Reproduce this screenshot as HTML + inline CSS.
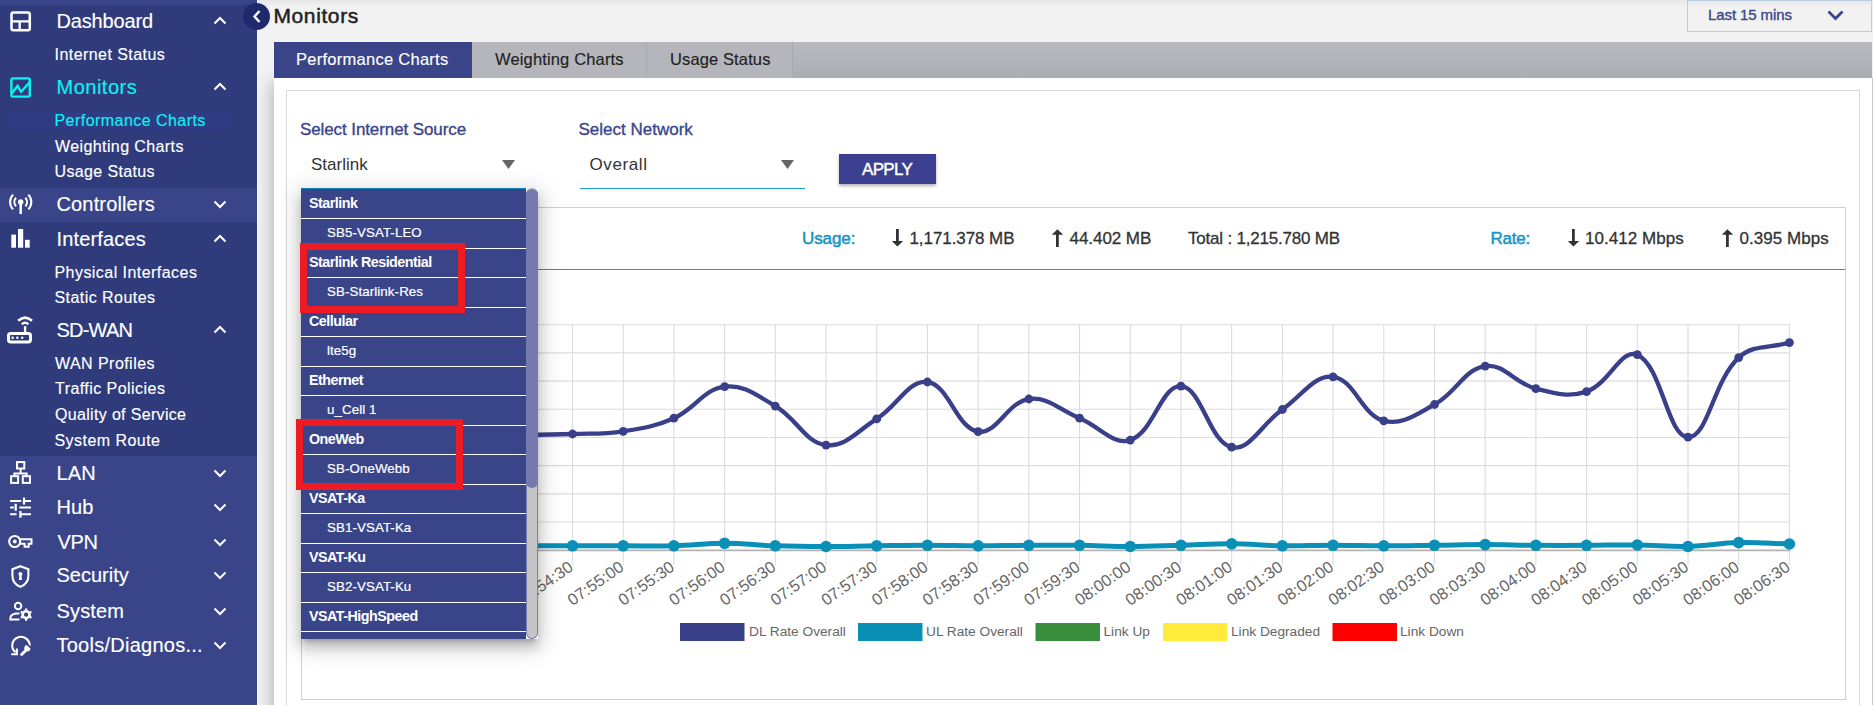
<!DOCTYPE html>
<html><head><meta charset="utf-8"><style>
html,body{margin:0;padding:0;width:1873px;height:705px;overflow:hidden;background:#f1f1f1;font-family:"Liberation Sans", sans-serif}
.t{position:absolute;white-space:nowrap;line-height:1;font-family:"Liberation Sans", sans-serif}
</style></head><body>
<div style="position:absolute;left:0px;top:0px;width:257px;height:705px;background:#3a4589"></div>
<div style="position:absolute;left:0px;top:5px;width:257px;height:183px;background:#303b7c"></div>
<div style="position:absolute;left:0px;top:222px;width:257px;height:234px;background:#303b7c"></div>
<div style="position:absolute;left:7px;top:111px;width:225px;height:18px;background:#2e3c84"></div>
<div style="position:absolute;left:257px;top:0px;width:1px;height:705px;background:#fafafa"></div>
<div class="t" style="left:56.5px;top:11px;font-size:20px;color:#fff;font-weight:400;letter-spacing:-0.15px;-webkit-text-stroke:0.15px #fff">Dashboard</div>
<div style="position:absolute;left:213px;top:11px;width:14px;height:9px"><svg width="14" height="9" viewBox="0 0 14 9"><path d="M1.5 7.5 L7 2 L12.5 7.5" fill="none" stroke="#fff" stroke-width="2"/></svg></div>
<div class="t" style="left:56.5px;top:77px;font-size:20px;color:#0af3f3;font-weight:400;letter-spacing:0.5px;-webkit-text-stroke:0.15px #0af3f3">Monitors</div>
<div style="position:absolute;left:213px;top:77px;width:14px;height:9px"><svg width="14" height="9" viewBox="0 0 14 9"><path d="M1.5 7.5 L7 2 L12.5 7.5" fill="none" stroke="#fff" stroke-width="2"/></svg></div>
<div class="t" style="left:56.5px;top:194px;font-size:20px;color:#fff;font-weight:400;letter-spacing:0.15px;-webkit-text-stroke:0.15px #fff">Controllers</div>
<div style="position:absolute;left:213px;top:194.5px;width:14px;height:9px"><svg width="14" height="9" viewBox="0 0 14 9"><path d="M1.5 1.5 L7 7 L12.5 1.5" fill="none" stroke="#fff" stroke-width="2"/></svg></div>
<div class="t" style="left:56.5px;top:229px;font-size:20px;color:#fff;font-weight:400;letter-spacing:0.15px;-webkit-text-stroke:0.15px #fff">Interfaces</div>
<div style="position:absolute;left:213px;top:229px;width:14px;height:9px"><svg width="14" height="9" viewBox="0 0 14 9"><path d="M1.5 7.5 L7 2 L12.5 7.5" fill="none" stroke="#fff" stroke-width="2"/></svg></div>
<div class="t" style="left:56.5px;top:320px;font-size:20px;color:#fff;font-weight:400;letter-spacing:-0.8px;-webkit-text-stroke:0.15px #fff">SD-WAN</div>
<div style="position:absolute;left:213px;top:320px;width:14px;height:9px"><svg width="14" height="9" viewBox="0 0 14 9"><path d="M1.5 7.5 L7 2 L12.5 7.5" fill="none" stroke="#fff" stroke-width="2"/></svg></div>
<div class="t" style="left:56.5px;top:463px;font-size:20px;color:#fff;font-weight:400;letter-spacing:0.15px;-webkit-text-stroke:0.15px #fff">LAN</div>
<div style="position:absolute;left:213px;top:463.5px;width:14px;height:9px"><svg width="14" height="9" viewBox="0 0 14 9"><path d="M1.5 1.5 L7 7 L12.5 1.5" fill="none" stroke="#fff" stroke-width="2"/></svg></div>
<div class="t" style="left:56.5px;top:497px;font-size:20px;color:#fff;font-weight:400;letter-spacing:0.15px;-webkit-text-stroke:0.15px #fff">Hub</div>
<div style="position:absolute;left:213px;top:497.5px;width:14px;height:9px"><svg width="14" height="9" viewBox="0 0 14 9"><path d="M1.5 1.5 L7 7 L12.5 1.5" fill="none" stroke="#fff" stroke-width="2"/></svg></div>
<div class="t" style="left:57.5px;top:532px;font-size:20px;color:#fff;font-weight:400;letter-spacing:-0.3px;-webkit-text-stroke:0.15px #fff">VPN</div>
<div style="position:absolute;left:213px;top:532.5px;width:14px;height:9px"><svg width="14" height="9" viewBox="0 0 14 9"><path d="M1.5 1.5 L7 7 L12.5 1.5" fill="none" stroke="#fff" stroke-width="2"/></svg></div>
<div class="t" style="left:56.5px;top:565px;font-size:20px;color:#fff;font-weight:400;letter-spacing:0px;-webkit-text-stroke:0.15px #fff">Security</div>
<div style="position:absolute;left:213px;top:565.5px;width:14px;height:9px"><svg width="14" height="9" viewBox="0 0 14 9"><path d="M1.5 1.5 L7 7 L12.5 1.5" fill="none" stroke="#fff" stroke-width="2"/></svg></div>
<div class="t" style="left:56.5px;top:601px;font-size:20px;color:#fff;font-weight:400;letter-spacing:0.15px;-webkit-text-stroke:0.15px #fff">System</div>
<div style="position:absolute;left:213px;top:601.5px;width:14px;height:9px"><svg width="14" height="9" viewBox="0 0 14 9"><path d="M1.5 1.5 L7 7 L12.5 1.5" fill="none" stroke="#fff" stroke-width="2"/></svg></div>
<div class="t" style="left:56.5px;top:635px;font-size:20px;color:#fff;font-weight:400;letter-spacing:0.25px;-webkit-text-stroke:0.15px #fff">Tools/Diagnos...</div>
<div style="position:absolute;left:213px;top:635.5px;width:14px;height:9px"><svg width="14" height="9" viewBox="0 0 14 9"><path d="M1.5 1.5 L7 7 L12.5 1.5" fill="none" stroke="#fff" stroke-width="2"/></svg></div>
<div class="t" style="left:54.5px;top:47px;font-size:16px;color:#fff;font-weight:400;letter-spacing:0.45px;-webkit-text-stroke:0.15px #fff">Internet Status</div>
<div class="t" style="left:54.5px;top:113px;font-size:16px;color:#0af3f3;font-weight:400;letter-spacing:0.45px;-webkit-text-stroke:0.15px #0af3f3">Performance Charts</div>
<div class="t" style="left:55px;top:139px;font-size:16px;color:#fff;font-weight:400;letter-spacing:0.4px;-webkit-text-stroke:0.15px #fff">Weighting Charts</div>
<div class="t" style="left:54.5px;top:164px;font-size:16px;color:#fff;font-weight:400;letter-spacing:0.37px;-webkit-text-stroke:0.15px #fff">Usage Status</div>
<div class="t" style="left:54.5px;top:265px;font-size:16px;color:#fff;font-weight:400;letter-spacing:0.45px;-webkit-text-stroke:0.15px #fff">Physical Interfaces</div>
<div class="t" style="left:54.5px;top:290px;font-size:16px;color:#fff;font-weight:400;letter-spacing:0.45px;-webkit-text-stroke:0.15px #fff">Static Routes</div>
<div class="t" style="left:55px;top:356px;font-size:16px;color:#fff;font-weight:400;letter-spacing:0.45px;-webkit-text-stroke:0.15px #fff">WAN Profiles</div>
<div class="t" style="left:55px;top:381px;font-size:16px;color:#fff;font-weight:400;letter-spacing:0.45px;-webkit-text-stroke:0.15px #fff">Traffic Policies</div>
<div class="t" style="left:55px;top:407px;font-size:16px;color:#fff;font-weight:400;letter-spacing:0.33px;-webkit-text-stroke:0.15px #fff">Quality of Service</div>
<div class="t" style="left:54.5px;top:433px;font-size:16px;color:#fff;font-weight:400;letter-spacing:0.45px;-webkit-text-stroke:0.15px #fff">System Route</div>
<svg style="position:absolute;left:0px;top:0px" width="40" height="705" viewBox="0 0 40 705">
<rect x="11.5" y="12.5" width="18.3" height="17.8" rx="2" fill="none" stroke="#fff" stroke-width="2.5"/>
<path d="M11.5 21.3H29.8M19.7 21.3V30.3" stroke="#fff" stroke-width="2.3"/>
<rect x="11.4" y="78.4" width="18.4" height="18.2" rx="1.5" fill="none" stroke="#0af3f3" stroke-width="2.4"/>
<path d="M12 93.3 L17.6 85.9 L21.1 91.8 L29.6 82.3" fill="none" stroke="#0af3f3" stroke-width="2.3"/>
<path d="M13.07 194.64 A10.6 10.6 0 0 0 13.07 209.36 M28.33 194.64 A10.6 10.6 0 0 1 28.33 209.36 M16.02 197.78 A6.3 6.3 0 0 0 16.02 206.22 M25.38 197.78 A6.3 6.3 0 0 1 25.38 206.22 " fill="none" stroke="#fff" stroke-width="2.1"/>
<circle cx="20.7" cy="202" r="2.7" fill="#fff"/><rect x="19.45" y="202" width="2.5" height="12" fill="#fff"/>
<rect x="11.3" y="234.6" width="4.7" height="13.1" fill="#fff"/><rect x="18" y="229" width="5.2" height="18.7" fill="#fff"/><rect x="25" y="239.8" width="4.7" height="7.9" fill="#fff"/>
<rect x="8.5" y="333.4" width="22" height="8.6" rx="2.2" fill="none" stroke="#fff" stroke-width="3"/>
<circle cx="12.6" cy="337.8" r="1.25" fill="#fff"/><circle cx="17.3" cy="337.8" r="1.25" fill="#fff"/><circle cx="22.2" cy="337.8" r="1.25" fill="#fff"/>
<rect x="23.9" y="326.2" width="2.4" height="6" fill="#fff"/>
<path d="M18.2 320.8 Q25.1 314.3 32 320.8" fill="none" stroke="#fff" stroke-width="2.6"/>
<path d="M21.8 324.3 Q25.1 321.2 28.4 324.3" fill="none" stroke="#fff" stroke-width="2.6"/>
<rect x="17" y="462.1" width="7.3" height="6.4" fill="none" stroke="#fff" stroke-width="2"/>
<path d="M20.6 468.5V473.4M14.4 473.4H26.6M14.4 472.4V476M26.6 472.4V476" fill="none" stroke="#fff" stroke-width="2"/>
<rect x="11.1" y="476.2" width="7" height="6.7" fill="none" stroke="#fff" stroke-width="2"/>
<rect x="22.8" y="476.2" width="7.2" height="6.7" fill="none" stroke="#fff" stroke-width="2"/>
<path d="M10.1 501H21.3M23.3 501H31M10.1 507.5H13.8M19.4 507.5H31M10.1 514.2H16.6M20.4 514.2H31" stroke="#fff" stroke-width="2.1"/>
<path d="M24 497.6V504.4M15.7 503.8V510.8M20.4 511V517.8" stroke="#fff" stroke-width="2.2"/>
<circle cx="14.7" cy="541.5" r="5.5" fill="none" stroke="#fff" stroke-width="2.1"/>
<circle cx="14.8" cy="541.5" r="1.9" fill="#fff"/>
<path d="M20.3 539.3H31.5V543.8H28.7V546.8H24.6V543.8H20.3" fill="none" stroke="#fff" stroke-width="2"/>
<path d="M20.4 566.2 L28.4 569.3 V575.5 C28.4 581 25 585 20.4 586.9 C15.8 585 12.4 581 12.4 575.5 V569.3 Z" fill="none" stroke="#fff" stroke-width="2.1"/>
<circle cx="20.4" cy="574" r="2" fill="#fff"/><path d="M19.5 574.5H21.3L22 580H18.8Z" fill="#fff"/>
<circle cx="18.1" cy="606" r="3.2" fill="none" stroke="#fff" stroke-width="2"/>
<path d="M19.5 613.6 C13 613 10.4 615.5 10.4 618 V619.6 H19.5" fill="none" stroke="#fff" stroke-width="2"/>
<circle cx="26.1" cy="614.7" r="3.6" fill="none" stroke="#fff" stroke-width="2.4"/>
<path d="M26.1 608.6V620.8M20.8 611.65L31.4 617.75M20.8 617.75L31.4 611.65" stroke="#fff" stroke-width="2.2"/>
<circle cx="26.1" cy="614.7" r="4.2" fill="#3a4589"/><circle cx="26.1" cy="614.7" r="3.3" fill="none" stroke="#fff" stroke-width="2.3"/>
<path d="M29.6 646.5 A8.7 8.7 0 1 0 15.5 652.3" fill="none" stroke="#fff" stroke-width="2.1"/>
<path d="M11.3 654.3H16.9V648.6" fill="none" stroke="#fff" stroke-width="2.1"/>
<path d="M21.6 654.6 L26.2 650" stroke="#fff" stroke-width="2.8" stroke-linecap="round"/>
<circle cx="27.4" cy="648.2" r="3.1" fill="#fff"/><path d="M27.6 644.6 L31.2 648.2" stroke="#3a4589" stroke-width="1.8"/>
</svg>
<div style="position:absolute;left:258px;top:0px;width:1615px;height:705px;background:#f2f2f2"></div>
<div style="position:absolute;left:258px;top:0px;width:1615px;height:7px;background:linear-gradient(#e7e7e7,#f2f2f2)"></div>
<div style="position:absolute;left:243px;top:3px;width:27px;height:27px;border-radius:50%;background:#1f2a6e"></div>
<svg style="position:absolute;left:250px;top:8px" width="14" height="17" viewBox="0 0 14 17"><path d="M9.5 3 L4.5 8.5 L9.5 14" fill="none" stroke="#fff" stroke-width="2.4"/></svg>
<div class="t" style="left:273.5px;top:5px;font-size:21px;color:#222;font-weight:400;letter-spacing:0.6px;-webkit-text-stroke:0.5px #222">Monitors</div>
<div style="position:absolute;left:1687px;top:0px;width:185px;height:32px;border:1px solid #b9cde3;box-sizing:border-box"></div>
<div class="t" style="left:1708px;top:7px;font-size:15px;color:#3a4589;font-weight:400;letter-spacing:-0.1px;-webkit-text-stroke:0.35px #3a4589">Last 15 mins</div>
<svg style="position:absolute;left:1827px;top:10px" width="17" height="11" viewBox="0 0 17 11"><path d="M1.5 1.5 L8.5 8.5 L15.5 1.5" fill="none" stroke="#3a4589" stroke-width="2.8"/></svg>
<div style="position:absolute;left:274px;top:78px;width:1598px;height:700px;background:#fff;box-shadow:-3px 4px 15px rgba(0,0,0,0.24)"></div>
<div style="position:absolute;left:1872px;top:78px;width:1px;height:627px;background:#c9c9c9"></div>
<div style="position:absolute;left:274px;top:42px;width:1598px;height:36px;background:linear-gradient(#b8babe,#abadb2)"></div>
<div style="position:absolute;left:274px;top:42px;width:198px;height:36px;background:#3a4589"></div>
<div style="position:absolute;left:646px;top:42px;width:1px;height:36px;background:#a7a9ae"></div>
<div style="position:absolute;left:792px;top:42px;width:1px;height:36px;background:#a7a9ae"></div>
<div style="position:absolute;left:472px;top:42px;width:174px;height:36px;background:#b4b6bb"></div>
<div style="position:absolute;left:647px;top:42px;width:145px;height:36px;background:#b4b6bb"></div>
<div class="t" style="left:296px;top:51px;font-size:16.5px;color:#fff;font-weight:400;letter-spacing:0.27px;-webkit-text-stroke:0.15px #fff">Performance Charts</div>
<div class="t" style="left:495px;top:51px;font-size:16.5px;color:#222;font-weight:400;letter-spacing:0.15px;-webkit-text-stroke:0.15px #222">Weighting Charts</div>
<div class="t" style="left:670px;top:51px;font-size:16.5px;color:#222;font-weight:400;letter-spacing:0.12px;-webkit-text-stroke:0.15px #222">Usage Status</div>
<div style="position:absolute;left:286px;top:90px;width:1574px;height:640px;border:1px solid #d9d9d9;box-sizing:border-box"></div>
<div class="t" style="left:300px;top:121px;font-size:17px;color:#3a4589;font-weight:400;letter-spacing:-0.1px;-webkit-text-stroke:0.35px #3a4589">Select Internet Source</div>
<div class="t" style="left:578.5px;top:121px;font-size:17px;color:#3a4589;font-weight:400;letter-spacing:0px;-webkit-text-stroke:0.35px #3a4589">Select Network</div>
<div class="t" style="left:311px;top:156px;font-size:17px;color:#333;font-weight:400;letter-spacing:0px;">Starlink</div>
<div class="t" style="left:589.5px;top:156px;font-size:17px;color:#333;font-weight:400;letter-spacing:0.6px;">Overall</div>
<svg style="position:absolute;left:502px;top:160px" width="13" height="9" viewBox="0 0 13 9"><path d="M0 0H13L6.5 9Z" fill="#666"/></svg>
<svg style="position:absolute;left:781px;top:160px" width="13" height="9" viewBox="0 0 13 9"><path d="M0 0H13L6.5 9Z" fill="#666"/></svg>
<div style="position:absolute;left:580px;top:187.5px;width:225px;height:1.5px;background:#1e9bd0"></div>
<div style="position:absolute;left:839px;top:154px;width:97px;height:30px;background:#3a3f8f;box-shadow:0 2px 3px rgba(0,0,0,0.3)"></div>
<div class="t" style="left:862px;top:161px;font-size:17px;color:#fff;font-weight:400;letter-spacing:-0.7px;-webkit-text-stroke:0.4px #fff">APPLY</div>
<div style="position:absolute;left:301px;top:207px;width:1545px;height:493px;border:1px solid #d0d0d0;box-sizing:border-box"></div>
<div style="position:absolute;left:302px;top:269px;width:1543px;height:1.2px;background:#1c98c8"></div>
<div class="t" style="left:802px;top:230px;font-size:17px;color:#1b96c6;font-weight:400;letter-spacing:-0.1px;-webkit-text-stroke:0.55px #1b96c6">Usage:</div>
<div class="t" style="left:1490.5px;top:230px;font-size:17px;color:#1b96c6;font-weight:400;letter-spacing:-0.2px;-webkit-text-stroke:0.55px #1b96c6">Rate:</div>
<svg style="position:absolute;left:891px;top:229px" width="13" height="18" viewBox="0 0 13 18"><rect x="5" y="0" width="2.8" height="13" fill="#333"/><path d="M0.8 12H12.2L6.4 17.6Z" fill="#333"/></svg>
<svg style="position:absolute;left:1050.5px;top:229px" width="13" height="18" viewBox="0 0 13 18"><rect x="5" y="5" width="2.8" height="13" fill="#333"/><path d="M0.8 5.8H12.2L6.4 0.2Z" fill="#333"/></svg>
<svg style="position:absolute;left:1566.5px;top:229px" width="13" height="18" viewBox="0 0 13 18"><rect x="5" y="0" width="2.8" height="13" fill="#333"/><path d="M0.8 12H12.2L6.4 17.6Z" fill="#333"/></svg>
<svg style="position:absolute;left:1721px;top:229px" width="13" height="18" viewBox="0 0 13 18"><rect x="5" y="5" width="2.8" height="13" fill="#333"/><path d="M0.8 5.8H12.2L6.4 0.2Z" fill="#333"/></svg>
<div class="t" style="left:909.5px;top:230px;font-size:17px;color:#333;font-weight:400;letter-spacing:-0.08px;-webkit-text-stroke:0.3px #333">1,171.378 MB</div>
<div class="t" style="left:1069.5px;top:230px;font-size:17px;color:#333;font-weight:400;letter-spacing:-0.05px;-webkit-text-stroke:0.3px #333">44.402 MB</div>
<div class="t" style="left:1188px;top:230px;font-size:17px;color:#333;font-weight:400;letter-spacing:-0.2px;-webkit-text-stroke:0.3px #333">Total : 1,215.780 MB</div>
<div class="t" style="left:1585px;top:230px;font-size:17px;color:#333;font-weight:400;letter-spacing:0.05px;-webkit-text-stroke:0.3px #333">10.412 Mbps</div>
<div class="t" style="left:1739.5px;top:230px;font-size:17px;color:#333;font-weight:400;letter-spacing:0.05px;-webkit-text-stroke:0.3px #333">0.395 Mbps</div>
<svg style="position:absolute;left:0;top:0" width="1873" height="705" viewBox="0 0 1873 705"><defs><clipPath id="cp"><rect x="302" y="270" width="1543" height="429"/></clipPath></defs><g clip-path="url(#cp)">
<line x1="320" y1="324.70" x2="1790" y2="324.70" stroke="#dcdcdc" stroke-width="1.1"/>
<line x1="320" y1="352.89" x2="1790" y2="352.89" stroke="#dcdcdc" stroke-width="1.1"/>
<line x1="320" y1="381.08" x2="1790" y2="381.08" stroke="#dcdcdc" stroke-width="1.1"/>
<line x1="320" y1="409.27" x2="1790" y2="409.27" stroke="#dcdcdc" stroke-width="1.1"/>
<line x1="320" y1="437.46" x2="1790" y2="437.46" stroke="#dcdcdc" stroke-width="1.1"/>
<line x1="320" y1="465.65" x2="1790" y2="465.65" stroke="#dcdcdc" stroke-width="1.1"/>
<line x1="320" y1="493.84" x2="1790" y2="493.84" stroke="#dcdcdc" stroke-width="1.1"/>
<line x1="320" y1="522.03" x2="1790" y2="522.03" stroke="#dcdcdc" stroke-width="1.1"/>
<line x1="369.68" y1="324.7" x2="369.68" y2="565" stroke="#dcdcdc" stroke-width="1.1"/>
<line x1="420.38" y1="324.7" x2="420.38" y2="565" stroke="#dcdcdc" stroke-width="1.1"/>
<line x1="471.09" y1="324.7" x2="471.09" y2="565" stroke="#dcdcdc" stroke-width="1.1"/>
<line x1="521.79" y1="324.7" x2="521.79" y2="565" stroke="#dcdcdc" stroke-width="1.1"/>
<line x1="572.50" y1="324.7" x2="572.50" y2="565" stroke="#dcdcdc" stroke-width="1.1"/>
<line x1="623.21" y1="324.7" x2="623.21" y2="565" stroke="#dcdcdc" stroke-width="1.1"/>
<line x1="673.91" y1="324.7" x2="673.91" y2="565" stroke="#dcdcdc" stroke-width="1.1"/>
<line x1="724.62" y1="324.7" x2="724.62" y2="565" stroke="#dcdcdc" stroke-width="1.1"/>
<line x1="775.32" y1="324.7" x2="775.32" y2="565" stroke="#dcdcdc" stroke-width="1.1"/>
<line x1="826.02" y1="324.7" x2="826.02" y2="565" stroke="#dcdcdc" stroke-width="1.1"/>
<line x1="876.73" y1="324.7" x2="876.73" y2="565" stroke="#dcdcdc" stroke-width="1.1"/>
<line x1="927.43" y1="324.7" x2="927.43" y2="565" stroke="#dcdcdc" stroke-width="1.1"/>
<line x1="978.14" y1="324.7" x2="978.14" y2="565" stroke="#dcdcdc" stroke-width="1.1"/>
<line x1="1028.85" y1="324.7" x2="1028.85" y2="565" stroke="#dcdcdc" stroke-width="1.1"/>
<line x1="1079.55" y1="324.7" x2="1079.55" y2="565" stroke="#dcdcdc" stroke-width="1.1"/>
<line x1="1130.26" y1="324.7" x2="1130.26" y2="565" stroke="#dcdcdc" stroke-width="1.1"/>
<line x1="1180.96" y1="324.7" x2="1180.96" y2="565" stroke="#dcdcdc" stroke-width="1.1"/>
<line x1="1231.66" y1="324.7" x2="1231.66" y2="565" stroke="#dcdcdc" stroke-width="1.1"/>
<line x1="1282.37" y1="324.7" x2="1282.37" y2="565" stroke="#dcdcdc" stroke-width="1.1"/>
<line x1="1333.07" y1="324.7" x2="1333.07" y2="565" stroke="#dcdcdc" stroke-width="1.1"/>
<line x1="1383.78" y1="324.7" x2="1383.78" y2="565" stroke="#dcdcdc" stroke-width="1.1"/>
<line x1="1434.49" y1="324.7" x2="1434.49" y2="565" stroke="#dcdcdc" stroke-width="1.1"/>
<line x1="1485.19" y1="324.7" x2="1485.19" y2="565" stroke="#dcdcdc" stroke-width="1.1"/>
<line x1="1535.89" y1="324.7" x2="1535.89" y2="565" stroke="#dcdcdc" stroke-width="1.1"/>
<line x1="1586.60" y1="324.7" x2="1586.60" y2="565" stroke="#dcdcdc" stroke-width="1.1"/>
<line x1="1637.31" y1="324.7" x2="1637.31" y2="565" stroke="#dcdcdc" stroke-width="1.1"/>
<line x1="1688.01" y1="324.7" x2="1688.01" y2="565" stroke="#dcdcdc" stroke-width="1.1"/>
<line x1="1738.71" y1="324.7" x2="1738.71" y2="565" stroke="#dcdcdc" stroke-width="1.1"/>
<line x1="1789.42" y1="324.7" x2="1789.42" y2="565" stroke="#dcdcdc" stroke-width="1.1"/>
<line x1="320" y1="550.4" x2="1790" y2="550.4" stroke="#b3b3b3" stroke-width="1.6"/>
<path d="M268.27 435.00 C288.55 435.00 298.69 435.00 318.98 435.00 C339.26 435.00 349.40 435.00 369.68 435.00 C389.96 435.00 400.10 435.00 420.38 435.00 C440.67 435.00 450.81 435.00 471.09 435.00 C491.37 435.00 501.51 435.20 521.79 435.00 C542.08 434.80 552.23 434.74 572.50 434.00 C592.79 433.26 603.24 434.41 623.21 431.30 C643.80 428.09 654.95 426.54 673.91 418.20 C695.52 408.70 703.37 389.23 724.62 386.70 C743.94 384.39 756.70 395.38 775.32 406.10 C797.26 418.74 804.59 442.39 826.02 445.10 C845.15 447.51 857.40 430.93 876.73 418.90 C897.97 405.69 908.40 379.62 927.43 382.00 C948.96 384.70 956.21 427.92 978.14 431.60 C996.78 434.72 1007.49 401.82 1028.85 399.00 C1048.05 396.46 1059.46 410.06 1079.55 418.20 C1100.02 426.50 1112.92 445.57 1130.26 440.10 C1153.48 432.77 1161.38 384.83 1180.96 386.20 C1201.95 387.67 1209.09 442.01 1231.66 447.20 C1249.65 451.33 1261.62 423.90 1282.37 409.50 C1302.18 395.74 1313.87 374.66 1333.07 376.80 C1354.44 379.18 1361.16 414.62 1383.78 420.80 C1401.72 425.70 1416.00 414.47 1434.49 404.50 C1456.56 392.59 1463.53 369.47 1485.19 366.10 C1504.09 363.15 1514.71 383.37 1535.89 388.70 C1555.28 393.57 1568.45 397.69 1586.60 391.60 C1609.01 384.09 1621.36 347.53 1637.31 354.70 C1661.93 365.77 1667.47 436.61 1688.01 437.20 C1708.03 437.77 1712.72 381.85 1738.71 357.60 C1753.28 344.01 1769.14 348.60 1789.42 342.60" fill="none" stroke="#3a3f8a" stroke-width="4.3"/>
<circle cx="369.68" cy="435" r="4.4" fill="#3a3f8a"/>
<circle cx="420.38" cy="435" r="4.4" fill="#3a3f8a"/>
<circle cx="471.09" cy="435" r="4.4" fill="#3a3f8a"/>
<circle cx="521.79" cy="435" r="4.4" fill="#3a3f8a"/>
<circle cx="572.50" cy="434" r="4.4" fill="#3a3f8a"/>
<circle cx="623.21" cy="431.3" r="4.4" fill="#3a3f8a"/>
<circle cx="673.91" cy="418.2" r="4.4" fill="#3a3f8a"/>
<circle cx="724.62" cy="386.7" r="4.4" fill="#3a3f8a"/>
<circle cx="775.32" cy="406.1" r="4.4" fill="#3a3f8a"/>
<circle cx="826.02" cy="445.1" r="4.4" fill="#3a3f8a"/>
<circle cx="876.73" cy="418.9" r="4.4" fill="#3a3f8a"/>
<circle cx="927.43" cy="382" r="4.4" fill="#3a3f8a"/>
<circle cx="978.14" cy="431.6" r="4.4" fill="#3a3f8a"/>
<circle cx="1028.85" cy="399" r="4.4" fill="#3a3f8a"/>
<circle cx="1079.55" cy="418.2" r="4.4" fill="#3a3f8a"/>
<circle cx="1130.26" cy="440.1" r="4.4" fill="#3a3f8a"/>
<circle cx="1180.96" cy="386.2" r="4.4" fill="#3a3f8a"/>
<circle cx="1231.66" cy="447.2" r="4.4" fill="#3a3f8a"/>
<circle cx="1282.37" cy="409.5" r="4.4" fill="#3a3f8a"/>
<circle cx="1333.07" cy="376.8" r="4.4" fill="#3a3f8a"/>
<circle cx="1383.78" cy="420.8" r="4.4" fill="#3a3f8a"/>
<circle cx="1434.49" cy="404.5" r="4.4" fill="#3a3f8a"/>
<circle cx="1485.19" cy="366.1" r="4.4" fill="#3a3f8a"/>
<circle cx="1535.89" cy="388.7" r="4.4" fill="#3a3f8a"/>
<circle cx="1586.60" cy="391.6" r="4.4" fill="#3a3f8a"/>
<circle cx="1637.31" cy="354.7" r="4.4" fill="#3a3f8a"/>
<circle cx="1688.01" cy="437.2" r="4.4" fill="#3a3f8a"/>
<circle cx="1738.71" cy="357.6" r="4.4" fill="#3a3f8a"/>
<circle cx="1789.42" cy="342.6" r="4.4" fill="#3a3f8a"/>
<path d="M268.27 545.80 C288.55 545.80 298.69 545.80 318.98 545.80 C339.26 545.80 349.40 545.80 369.68 545.80 C389.96 545.80 400.10 545.80 420.38 545.80 C440.67 545.80 450.81 545.80 471.09 545.80 C491.37 545.80 501.51 545.80 521.79 545.80 C542.08 545.80 552.22 545.80 572.50 545.80 C592.78 545.80 602.92 545.80 623.21 545.80 C643.49 545.80 653.64 546.30 673.91 545.80 C694.20 545.30 704.33 543.30 724.62 543.30 C744.90 543.30 755.03 545.16 775.32 545.80 C795.59 546.44 805.74 546.50 826.02 546.50 C846.31 546.50 856.45 546.04 876.73 545.80 C897.01 545.56 907.15 545.30 927.43 545.30 C947.72 545.30 957.86 545.80 978.14 545.80 C998.42 545.80 1008.56 545.40 1028.85 545.30 C1049.13 545.20 1059.27 545.06 1079.55 545.30 C1099.83 545.54 1109.97 546.50 1130.26 546.50 C1150.54 546.50 1160.68 545.84 1180.96 545.30 C1201.24 544.76 1211.39 543.70 1231.66 543.80 C1251.95 543.90 1262.08 545.50 1282.37 545.80 C1302.64 546.10 1312.79 545.30 1333.07 545.30 C1353.36 545.30 1363.50 545.80 1383.78 545.80 C1404.06 545.80 1414.20 545.54 1434.49 545.30 C1454.77 545.06 1464.91 544.60 1485.19 544.60 C1505.47 544.60 1515.61 545.16 1535.89 545.30 C1556.18 545.44 1566.32 545.36 1586.60 545.30 C1606.88 545.24 1617.03 544.76 1637.31 545.00 C1657.59 545.24 1667.75 546.98 1688.01 546.50 C1708.32 546.02 1718.41 543.10 1738.71 542.60 C1758.97 542.10 1769.14 543.44 1789.42 544.00" fill="none" stroke="#0a8fb7" stroke-width="5"/>
<circle cx="369.68" cy="545.8" r="5.8" fill="#0a8fb7"/>
<circle cx="420.38" cy="545.8" r="5.8" fill="#0a8fb7"/>
<circle cx="471.09" cy="545.8" r="5.8" fill="#0a8fb7"/>
<circle cx="521.79" cy="545.8" r="5.8" fill="#0a8fb7"/>
<circle cx="572.50" cy="545.8" r="5.8" fill="#0a8fb7"/>
<circle cx="623.21" cy="545.8" r="5.8" fill="#0a8fb7"/>
<circle cx="673.91" cy="545.8" r="5.8" fill="#0a8fb7"/>
<circle cx="724.62" cy="543.3" r="5.8" fill="#0a8fb7"/>
<circle cx="775.32" cy="545.8" r="5.8" fill="#0a8fb7"/>
<circle cx="826.02" cy="546.5" r="5.8" fill="#0a8fb7"/>
<circle cx="876.73" cy="545.8" r="5.8" fill="#0a8fb7"/>
<circle cx="927.43" cy="545.3" r="5.8" fill="#0a8fb7"/>
<circle cx="978.14" cy="545.8" r="5.8" fill="#0a8fb7"/>
<circle cx="1028.85" cy="545.3" r="5.8" fill="#0a8fb7"/>
<circle cx="1079.55" cy="545.3" r="5.8" fill="#0a8fb7"/>
<circle cx="1130.26" cy="546.5" r="5.8" fill="#0a8fb7"/>
<circle cx="1180.96" cy="545.3" r="5.8" fill="#0a8fb7"/>
<circle cx="1231.66" cy="543.8" r="5.8" fill="#0a8fb7"/>
<circle cx="1282.37" cy="545.8" r="5.8" fill="#0a8fb7"/>
<circle cx="1333.07" cy="545.3" r="5.8" fill="#0a8fb7"/>
<circle cx="1383.78" cy="545.8" r="5.8" fill="#0a8fb7"/>
<circle cx="1434.49" cy="545.3" r="5.8" fill="#0a8fb7"/>
<circle cx="1485.19" cy="544.6" r="5.8" fill="#0a8fb7"/>
<circle cx="1535.89" cy="545.3" r="5.8" fill="#0a8fb7"/>
<circle cx="1586.60" cy="545.3" r="5.8" fill="#0a8fb7"/>
<circle cx="1637.31" cy="545" r="5.8" fill="#0a8fb7"/>
<circle cx="1688.01" cy="546.5" r="5.8" fill="#0a8fb7"/>
<circle cx="1738.71" cy="542.6" r="5.8" fill="#0a8fb7"/>
<circle cx="1789.42" cy="544" r="5.8" fill="#0a8fb7"/>
<text x="0" y="0" text-anchor="end" dominant-baseline="middle" transform="translate(571.70 566) rotate(-35)" font-family="Liberation Sans" font-size="16.4" fill="#666">07:54:30</text>
<text x="0" y="0" text-anchor="end" dominant-baseline="middle" transform="translate(622.41 566) rotate(-35)" font-family="Liberation Sans" font-size="16.4" fill="#666">07:55:00</text>
<text x="0" y="0" text-anchor="end" dominant-baseline="middle" transform="translate(673.11 566) rotate(-35)" font-family="Liberation Sans" font-size="16.4" fill="#666">07:55:30</text>
<text x="0" y="0" text-anchor="end" dominant-baseline="middle" transform="translate(723.82 566) rotate(-35)" font-family="Liberation Sans" font-size="16.4" fill="#666">07:56:00</text>
<text x="0" y="0" text-anchor="end" dominant-baseline="middle" transform="translate(774.52 566) rotate(-35)" font-family="Liberation Sans" font-size="16.4" fill="#666">07:56:30</text>
<text x="0" y="0" text-anchor="end" dominant-baseline="middle" transform="translate(825.23 566) rotate(-35)" font-family="Liberation Sans" font-size="16.4" fill="#666">07:57:00</text>
<text x="0" y="0" text-anchor="end" dominant-baseline="middle" transform="translate(875.93 566) rotate(-35)" font-family="Liberation Sans" font-size="16.4" fill="#666">07:57:30</text>
<text x="0" y="0" text-anchor="end" dominant-baseline="middle" transform="translate(926.63 566) rotate(-35)" font-family="Liberation Sans" font-size="16.4" fill="#666">07:58:00</text>
<text x="0" y="0" text-anchor="end" dominant-baseline="middle" transform="translate(977.34 566) rotate(-35)" font-family="Liberation Sans" font-size="16.4" fill="#666">07:58:30</text>
<text x="0" y="0" text-anchor="end" dominant-baseline="middle" transform="translate(1028.05 566) rotate(-35)" font-family="Liberation Sans" font-size="16.4" fill="#666">07:59:00</text>
<text x="0" y="0" text-anchor="end" dominant-baseline="middle" transform="translate(1078.75 566) rotate(-35)" font-family="Liberation Sans" font-size="16.4" fill="#666">07:59:30</text>
<text x="0" y="0" text-anchor="end" dominant-baseline="middle" transform="translate(1129.46 566) rotate(-35)" font-family="Liberation Sans" font-size="16.4" fill="#666">08:00:00</text>
<text x="0" y="0" text-anchor="end" dominant-baseline="middle" transform="translate(1180.16 566) rotate(-35)" font-family="Liberation Sans" font-size="16.4" fill="#666">08:00:30</text>
<text x="0" y="0" text-anchor="end" dominant-baseline="middle" transform="translate(1230.87 566) rotate(-35)" font-family="Liberation Sans" font-size="16.4" fill="#666">08:01:00</text>
<text x="0" y="0" text-anchor="end" dominant-baseline="middle" transform="translate(1281.57 566) rotate(-35)" font-family="Liberation Sans" font-size="16.4" fill="#666">08:01:30</text>
<text x="0" y="0" text-anchor="end" dominant-baseline="middle" transform="translate(1332.27 566) rotate(-35)" font-family="Liberation Sans" font-size="16.4" fill="#666">08:02:00</text>
<text x="0" y="0" text-anchor="end" dominant-baseline="middle" transform="translate(1382.98 566) rotate(-35)" font-family="Liberation Sans" font-size="16.4" fill="#666">08:02:30</text>
<text x="0" y="0" text-anchor="end" dominant-baseline="middle" transform="translate(1433.69 566) rotate(-35)" font-family="Liberation Sans" font-size="16.4" fill="#666">08:03:00</text>
<text x="0" y="0" text-anchor="end" dominant-baseline="middle" transform="translate(1484.39 566) rotate(-35)" font-family="Liberation Sans" font-size="16.4" fill="#666">08:03:30</text>
<text x="0" y="0" text-anchor="end" dominant-baseline="middle" transform="translate(1535.10 566) rotate(-35)" font-family="Liberation Sans" font-size="16.4" fill="#666">08:04:00</text>
<text x="0" y="0" text-anchor="end" dominant-baseline="middle" transform="translate(1585.80 566) rotate(-35)" font-family="Liberation Sans" font-size="16.4" fill="#666">08:04:30</text>
<text x="0" y="0" text-anchor="end" dominant-baseline="middle" transform="translate(1636.51 566) rotate(-35)" font-family="Liberation Sans" font-size="16.4" fill="#666">08:05:00</text>
<text x="0" y="0" text-anchor="end" dominant-baseline="middle" transform="translate(1687.21 566) rotate(-35)" font-family="Liberation Sans" font-size="16.4" fill="#666">08:05:30</text>
<text x="0" y="0" text-anchor="end" dominant-baseline="middle" transform="translate(1737.91 566) rotate(-35)" font-family="Liberation Sans" font-size="16.4" fill="#666">08:06:00</text>
<text x="0" y="0" text-anchor="end" dominant-baseline="middle" transform="translate(1788.62 566) rotate(-35)" font-family="Liberation Sans" font-size="16.4" fill="#666">08:06:30</text>
<rect x="680" y="623" width="64.5" height="18" fill="#3a3f8a"/>
<text x="749" y="636" font-family="Liberation Sans" font-size="13.7" fill="#666">DL Rate Overall</text>
<rect x="858" y="623" width="64.5" height="18" fill="#0a8fb7"/>
<text x="926" y="636" font-family="Liberation Sans" font-size="13.7" fill="#666">UL Rate Overall</text>
<rect x="1035.5" y="623" width="64.5" height="18" fill="#388e3c"/>
<text x="1103.5" y="636" font-family="Liberation Sans" font-size="13.7" fill="#666">Link Up</text>
<rect x="1163" y="623" width="64.5" height="18" fill="#ffeb3b"/>
<text x="1231" y="636" font-family="Liberation Sans" font-size="13.7" fill="#666">Link Degraded</text>
<rect x="1332.5" y="623" width="64.5" height="18" fill="#ff0000"/>
<text x="1400" y="636" font-family="Liberation Sans" font-size="13.7" fill="#666">Link Down</text>
</g></svg>
<div style="position:absolute;left:301px;top:188px;width:237px;height:451px;box-shadow:0 5px 5px -3px rgba(0,0,0,.2), 0 8px 10px 1px rgba(0,0,0,.14), 0 6px 22px 4px rgba(0,0,0,.16)"></div>
<div style="position:absolute;left:301px;top:188px;width:225px;height:451px;background:#3a4589"></div>
<div style="position:absolute;left:301px;top:188px;width:225px;height:1px;background:#0e86ad"></div>
<div style="position:absolute;left:301px;top:218px;width:225px;height:1.3px;background:#fff"></div>
<div class="t" style="left:309px;top:196px;font-size:14.3px;color:#fff;font-weight:700;letter-spacing:-0.5px">Starlink</div>
<div style="position:absolute;left:301px;top:248px;width:225px;height:1.3px;background:#fff"></div>
<div class="t" style="left:327px;top:226px;font-size:13.3px;color:#fff;font-weight:400;letter-spacing:0.1px;-webkit-text-stroke:0.2px #fff">SB5-VSAT-LEO</div>
<div style="position:absolute;left:301px;top:277px;width:225px;height:1.3px;background:#fff"></div>
<div class="t" style="left:309px;top:255px;font-size:14.3px;color:#fff;font-weight:700;letter-spacing:-0.5px">Starlink Residential</div>
<div style="position:absolute;left:301px;top:307px;width:225px;height:1.3px;background:#fff"></div>
<div class="t" style="left:327px;top:285px;font-size:13.3px;color:#fff;font-weight:400;letter-spacing:0.1px;-webkit-text-stroke:0.2px #fff">SB-Starlink-Res</div>
<div style="position:absolute;left:301px;top:336px;width:225px;height:1.3px;background:#fff"></div>
<div class="t" style="left:309px;top:314px;font-size:14.3px;color:#fff;font-weight:700;letter-spacing:-0.5px">Cellular</div>
<div style="position:absolute;left:301px;top:366px;width:225px;height:1.3px;background:#fff"></div>
<div class="t" style="left:327px;top:344px;font-size:13.3px;color:#fff;font-weight:400;letter-spacing:0.1px;-webkit-text-stroke:0.2px #fff">lte5g</div>
<div style="position:absolute;left:301px;top:395px;width:225px;height:1.3px;background:#fff"></div>
<div class="t" style="left:309px;top:373px;font-size:14.3px;color:#fff;font-weight:700;letter-spacing:-0.5px">Ethernet</div>
<div style="position:absolute;left:301px;top:425px;width:225px;height:1.3px;background:#fff"></div>
<div class="t" style="left:327px;top:403px;font-size:13.3px;color:#fff;font-weight:400;letter-spacing:0.1px;-webkit-text-stroke:0.2px #fff">u_Cell 1</div>
<div style="position:absolute;left:301px;top:454px;width:225px;height:1.3px;background:#fff"></div>
<div class="t" style="left:309px;top:432px;font-size:14.3px;color:#fff;font-weight:700;letter-spacing:-0.5px">OneWeb</div>
<div style="position:absolute;left:301px;top:484px;width:225px;height:1.3px;background:#fff"></div>
<div class="t" style="left:327px;top:462px;font-size:13.3px;color:#fff;font-weight:400;letter-spacing:0.1px;-webkit-text-stroke:0.2px #fff">SB-OneWebb</div>
<div style="position:absolute;left:301px;top:513px;width:225px;height:1.3px;background:#fff"></div>
<div class="t" style="left:309px;top:491px;font-size:14.3px;color:#fff;font-weight:700;letter-spacing:-0.5px">VSAT-Ka</div>
<div style="position:absolute;left:301px;top:543px;width:225px;height:1.3px;background:#fff"></div>
<div class="t" style="left:327px;top:521px;font-size:13.3px;color:#fff;font-weight:400;letter-spacing:0.1px;-webkit-text-stroke:0.2px #fff">SB1-VSAT-Ka</div>
<div style="position:absolute;left:301px;top:572px;width:225px;height:1.3px;background:#fff"></div>
<div class="t" style="left:309px;top:550px;font-size:14.3px;color:#fff;font-weight:700;letter-spacing:-0.5px">VSAT-Ku</div>
<div style="position:absolute;left:301px;top:602px;width:225px;height:1.3px;background:#fff"></div>
<div class="t" style="left:327px;top:580px;font-size:13.3px;color:#fff;font-weight:400;letter-spacing:0.1px;-webkit-text-stroke:0.2px #fff">SB2-VSAT-Ku</div>
<div style="position:absolute;left:301px;top:631px;width:225px;height:1.3px;background:#fff"></div>
<div class="t" style="left:309px;top:609px;font-size:14.3px;color:#fff;font-weight:700;letter-spacing:-0.5px">VSAT-HighSpeed</div>
<div style="position:absolute;left:526px;top:188px;width:12px;height:451px;background:#fff"></div>
<div style="position:absolute;left:526px;top:188px;width:12px;height:451px;background:#c4c4c4;border-left:1px solid #7a7fb5;border-right:1px solid #7a7fb5;border-bottom:1px solid #7a7fb5;box-sizing:border-box;border-radius:6px"></div>
<div style="position:absolute;left:526px;top:188.5px;width:12px;height:299.5px;background:#7479ae;border-radius:6px"></div>
<div style="position:absolute;left:300px;top:243px;width:165px;height:70px;border:7px solid #ed1c24;box-sizing:border-box"></div>
<div style="position:absolute;left:296px;top:419px;width:167px;height:71px;border:7px solid #ed1c24;box-sizing:border-box"></div>
</body></html>
